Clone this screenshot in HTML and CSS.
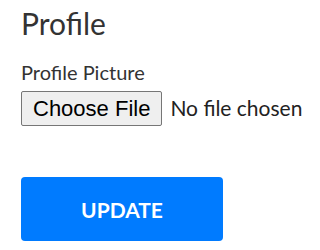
FILE: index.html
```html
<!DOCTYPE html>
<html lang="en">
<head>
<meta charset="utf-8">
<title>Profile</title>
<link rel="stylesheet" href="styles.css">
</head>
<body>
<form class="profile">
  <h1 class="title">Profile</h1>
  <label class="label" for="pic">Profile Picture</label>
  <input class="file" id="pic" type="file">
  <button class="update" type="button">Update</button>
</form>
</body>
</html>
```

FILE: styles.css
```css
html, body {
  margin: 0;
  padding: 0;
  background: #fff;
  overflow: hidden;
}
body {
  font-family: Lato, "Open Sans", sans-serif;
  color: #333;
}
.profile {
  display: flex;
  flex-direction: column;
  align-items: flex-start;
  padding: 0 0 0 21px;
}
.title {
  font-size: 30px;
  font-weight: 400;
  line-height: 36px;
  margin: 5px 0 0 0;
}
.label {
  font-size: 20px;
  line-height: 24px;
  margin-top: 19px;
}
.file {
  margin-top: 7px;
  width: 290px;
  font-family: Lato, sans-serif;
  font-size: 21px;
  color: #222;
  height: 35px;
}
.file::file-selector-button {
  font-family: "Liberation Sans", Arial, sans-serif;
  font-size: 22px;
  color: #000;
  background: #efefef;
  border: 1px solid #767676;
  border-radius: 2px;
  padding: 2px 11px;
  height: 35px;
  margin-right: 8px;
}
.update {
  margin-top: 51px;
  width: 202px;
  height: 64px;
  background: #007bff;
  color: #fff;
  border: none;
  border-radius: 4px;
  font-family: Lato, sans-serif;
  font-weight: 700;
  font-size: 21px;
  text-transform: uppercase;
}
```
